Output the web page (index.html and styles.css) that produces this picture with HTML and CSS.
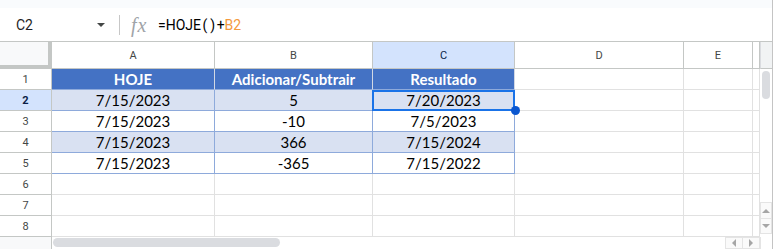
FILE: index.html
```html
<!DOCTYPE html>
<html>
<head>
<title>HOJE</title>
<meta charset="utf-8">
<link rel="stylesheet" href="styles.css">
</head>
<body>
<div class="app">
	<div class="top"></div>
	<div class="fbar">
		<div class="namebox">C2<span class="caret"></span></div>
		<div class="sep"></div>
		<div class="fx">fx</div>
		<div class="formula">=HOJE<span class="paren">(</span><span class="paren">)</span>+<span class="ref">B2</span></div>
	</div>
	<div class="main">
		<div class="grid">
			<div class="corner"></div>
			<div class="ch">A</div>
			<div class="ch">B</div>
			<div class="ch on">C</div>
			<div class="ch">D</div>
			<div class="ch">E</div>
			<div class="ch"></div>

			<div class="rh">1</div>
			<div class="c th">HOJE</div>
			<div class="c th">Adicionar/Subtrair</div>
			<div class="c th">Resultado</div>
			<div class="c"></div>
			<div class="c"></div>
			<div class="c"></div>

			<div class="rh on">2</div>
			<div class="c tb band">7/15/2023</div>
			<div class="c tb band">5</div>
			<div class="c tb band cur">7/20/2023<span class="sel"></span><span class="dot"></span></div>
			<div class="c"></div>
			<div class="c"></div>
			<div class="c"></div>

			<div class="rh">3</div>
			<div class="c tb">7/15/2023</div>
			<div class="c tb">-10</div>
			<div class="c tb">7/5/2023</div>
			<div class="c"></div>
			<div class="c"></div>
			<div class="c"></div>

			<div class="rh">4</div>
			<div class="c tb band">7/15/2023</div>
			<div class="c tb band">366</div>
			<div class="c tb band">7/15/2024</div>
			<div class="c"></div>
			<div class="c"></div>
			<div class="c"></div>

			<div class="rh">5</div>
			<div class="c tb">7/15/2023</div>
			<div class="c tb">-365</div>
			<div class="c tb">7/15/2022</div>
			<div class="c"></div>
			<div class="c"></div>
			<div class="c"></div>

			<div class="rh">6</div>
			<div class="c"></div>
			<div class="c"></div>
			<div class="c"></div>
			<div class="c"></div>
			<div class="c"></div>
			<div class="c"></div>

			<div class="rh">7</div>
			<div class="c"></div>
			<div class="c"></div>
			<div class="c"></div>
			<div class="c"></div>
			<div class="c"></div>
			<div class="c"></div>

			<div class="rh">8</div>
			<div class="c"></div>
			<div class="c"></div>
			<div class="c"></div>
			<div class="c"></div>
			<div class="c"></div>
			<div class="c"></div>
		</div>
		<div class="vscroll">
			<div class="vcap"></div>
			<div class="vthumb"></div>
			<div class="varrows">
				<div class="abtn"><span class="tri up"></span></div>
				<div class="abtn"><span class="tri down"></span></div>
			</div>
		</div>
	</div>
	<div class="hscroll">
		<div class="hcorner"></div>
		<div class="hthumb"></div>
		<div class="harrows">
			<div class="abtn"><span class="tri left"></span></div>
			<div class="abtn"><span class="tri right"></span></div>
		</div>
		<div class="hend"></div>
	</div>
</div>
</body>
</html>
```

FILE: styles.css
```css
* {margin:0;padding:0;box-sizing:border-box;}
body {background:#fff;overflow:hidden;font-family:Roboto,"Liberation Sans",sans-serif;}
.app {width:773px;height:249px;border-right:1px solid #c4c4c4;overflow:hidden;}
.top {height:8px;background:#f9fbfd;}

.fbar {height:34px;display:flex;align-items:center;border-bottom:1px solid #c4c7c5;}
.namebox {width:119px;height:100%;display:flex;align-items:center;padding-left:16px;font-size:14px;color:#1f1f1f;}
.caret {margin-left:auto;margin-right:14px;width:0;height:0;border-left:4px solid transparent;border-right:4px solid transparent;border-top:4px solid #444746;}
.sep {width:1px;height:20px;background:#c7c7c7;}
.fx {margin-left:11px;width:27px;font-family:"Liberation Serif",serif;font-style:italic;font-size:20px;color:#a0a4a8;letter-spacing:1px;line-height:20px;}
.formula {font-size:14px;color:#000;}
.formula .paren {margin:0 1.5px;}
.formula .ref {color:#f4993d;}

.main {display:flex;}
.grid {display:grid;grid-template-columns:52px 163px 158px 142px 169px 69px 7px;grid-template-rows:27px repeat(8,21px);}
.grid > div {border-right:1px solid #e1e1e1;border-bottom:1px solid #e1e1e1;display:flex;align-items:center;justify-content:center;}
.grid > .corner {background:#f8f9fa;border-right:4px solid #c4c7c5;border-bottom:4px solid #c4c7c5;}
.grid > .ch {font-size:11px;color:#444746;border-color:#c4c7c5;}
.grid > .rh {font-size:11px;color:#444746;border-color:#c4c7c5;}
.grid > .on {background:#d3e3fd;color:#0b1f47;}
.grid > .rh.on {font-weight:700;}
.c {font-family:Lato,"Liberation Sans",sans-serif;font-size:15px;line-height:20px;color:#000;}
.grid > .th {background:#4472c4;color:#fff;font-weight:700;border-right-color:#d2d8e4;border-bottom-color:#8eaadb;}
.grid > .tb {border-color:#8eaadb;}
.grid > .band {background:#d9e1f2;}
.cur {position:relative;}
.sel {position:absolute;left:-1px;top:0;right:-1px;bottom:-1px;border:2px solid #1a73e8;}
.dot {position:absolute;right:-6px;bottom:-5px;width:9px;height:9px;border-radius:50%;background:#0b57d0;z-index:2;}

.vscroll {width:12px;display:flex;flex-direction:column;}
.vcap {height:27px;background:#f1f3f4;border-left:1px solid #dadce0;border-bottom:1px solid #c4c7c5;}
.vthumb {margin:2px 0 0 2px;width:8px;height:28px;border-radius:4px;background:#dadce0;}
.varrows {margin-top:auto;margin-bottom:3px;}
.abtn {display:flex;align-items:center;justify-content:center;border:1px solid #e4e4e4;background:#fafafa;}
.varrows .abtn {height:17px;}
.varrows .abtn + .abtn {height:15px;border-top:0;}

.hscroll {height:12px;display:flex;}
.hcorner {width:52px;background:#f8f9fa;border-right:1px solid #c4c7c5;}
.hthumb {margin:1px 0 0 1px;width:227px;height:9px;border-radius:5px;background:#dadce0;}
.harrows {margin-left:auto;display:flex;}
.harrows .abtn {width:18px;height:12px;}
.harrows .abtn + .abtn {width:17px;border-left:0;}
.hend {width:12px;border-left:1px solid #e4e4e4;}

.tri {width:0;height:0;}
.tri.up {border-left:4px solid transparent;border-right:4px solid transparent;border-bottom:4px solid #a6a6a6;}
.tri.down {border-left:4px solid transparent;border-right:4px solid transparent;border-top:4px solid #a6a6a6;}
.tri.left {border-top:4px solid transparent;border-bottom:4px solid transparent;border-right:4px solid #a6a6a6;}
.tri.right {border-top:4px solid transparent;border-bottom:4px solid transparent;border-left:4px solid #a6a6a6;}
```
